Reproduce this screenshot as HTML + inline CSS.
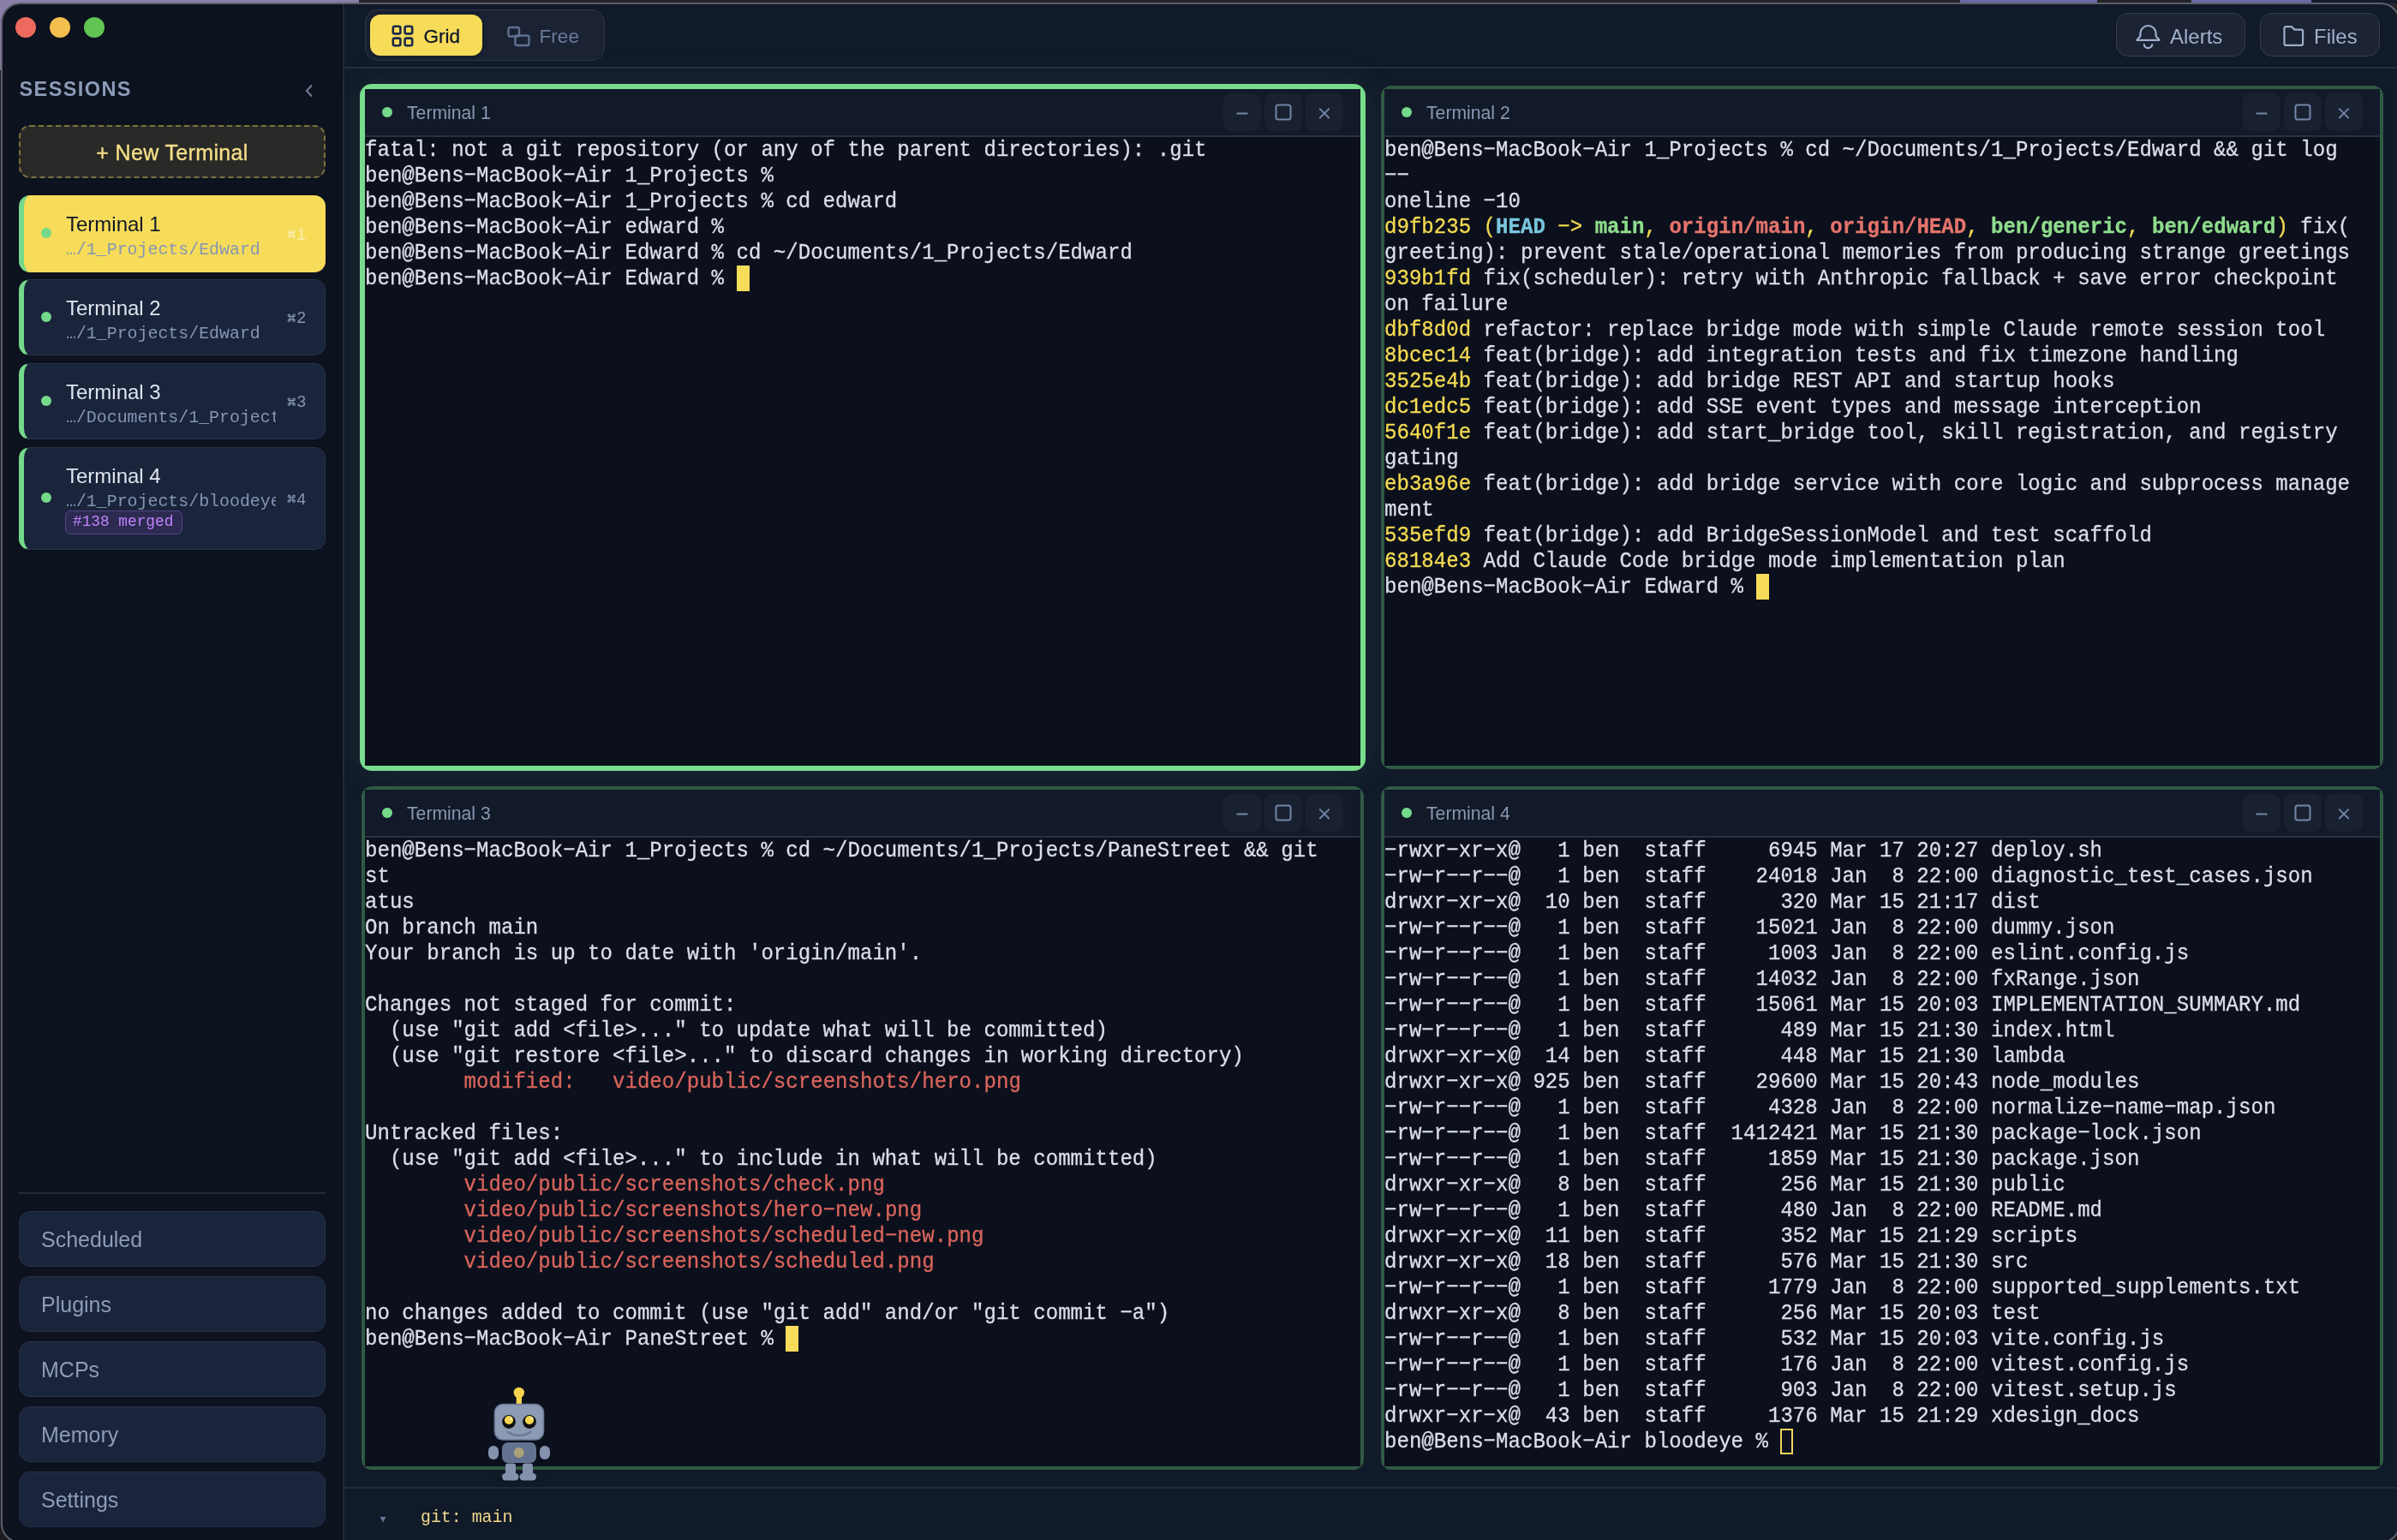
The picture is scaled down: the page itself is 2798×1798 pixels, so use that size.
<!DOCTYPE html>
<html><head><meta charset="utf-8"><title>PaneStreet</title>
<style>
html,body{margin:0;padding:0}
.inner{will-change:transform}
body{width:2798px;height:1798px;overflow:hidden;position:relative;background:#1e1c22;font-family:"Liberation Sans",sans-serif}
.deskL{position:absolute;left:0;top:0;width:419px;height:82px;background:#8a7fa7}
.deskR{position:absolute;left:419px;top:0;width:2379px;height:30px;background:#262427}
.win{position:absolute;left:2px;top:4px;width:2799px;height:1797px;border-radius:22px;overflow:hidden;background:#111a29}
.inner{position:absolute;left:-2px;top:-4px;width:2798px;height:1798px}
.winborder{position:absolute;left:1px;top:3px;width:2801px;height:1799px;border-radius:23px;border:2px solid #5b606b;box-sizing:border-box;pointer-events:none}
.inner>*{position:absolute}
.sidebar{left:0;top:0;width:400px;height:1798px;background:#0c121e;border-right:2px solid #242933}
.tl{top:20px;width:24px;height:24px;border-radius:50%}
.sess{left:22.5px;top:89px;font-size:23.5px;font-weight:bold;color:#8c9bb8;letter-spacing:1.4px;line-height:30px}
.chev{left:354px;top:97px}
.newt{left:22px;top:146px;width:358px;height:62px;box-sizing:border-box;border:2px dashed #7e7040;border-radius:13px;background:#292a27;color:#f6de88;font-size:25px;text-align:center;line-height:60px;-webkit-text-stroke:0.35px #f6de88;letter-spacing:0.35px}
.card{left:22px;width:358px;box-sizing:border-box;border-radius:13px;background:#1a243b;border:1.5px solid #27324a;border-left:6px solid #74d98a}
.card.active{background:#f7dc5a;border-color:#f7dc5a #f7dc5a #f7dc5a #74d98a}
.cdot{position:absolute;left:20px;width:12px;height:12px;border-radius:50%;background:#74d98a;top:50%;margin-top:-7px}
.card .ctitle{position:absolute;left:49px;top:18px;font-size:24px;color:#dfe5ef;line-height:30px;white-space:nowrap}
.card.active .ctitle{color:#101826}
.card .cpath{position:absolute;left:49px;top:50px;width:245px;overflow:hidden;white-space:nowrap;font-family:"Liberation Mono",monospace;font-size:19.9px;color:#8595b3;line-height:26px}
.ckey{position:absolute;left:307px;top:50%;margin-top:-11.5px;font-size:19px;color:#8896b2;line-height:24px;display:flex;align-items:center}
.ckey span{margin-left:1px}
.card.active .ckey{color:#f9eeb0}
.cmd{display:block}
.badge{position:absolute;left:48px;top:73px;height:28px;box-sizing:border-box;padding:0 10px 0 8px;border:1.5px solid #52438a;background:#2d2a52;border-radius:6px;font-family:"Liberation Mono",monospace;font-size:17.8px;color:#c084fc;line-height:25px;white-space:nowrap}
.sdiv{left:22px;top:1392px;width:358px;height:2px;background:#222a37}
.sbtn{left:22px;width:358px;height:65px;box-sizing:border-box;border-radius:13px;background:#1a243b;border:1.5px solid #27324a;color:#8e9cb8;font-size:25px;line-height:65px;padding-left:25px}
.topbar{left:402px;top:0;width:2397px;height:78px;background:#111a29;border-bottom:2px solid #252d3c}
.toggle{left:426px;top:11px;width:280px;height:60px;box-sizing:border-box;border:1.5px solid #2f384a;border-radius:15px;background:#1a2233}
.gridbtn{position:absolute;left:5px;top:5px;width:131px;height:48px;border-radius:12px;background:#f7dc5a;box-shadow:0 0 6px rgba(0,0,0,0.35)}
.gridbtn svg{position:absolute;left:25px;top:12px}
.gridbtn span{position:absolute;left:62.5px;top:10.5px;font-size:22.6px;line-height:30px;color:#0f1828;-webkit-text-stroke:0.3px #0f1828}
.freebtn svg{position:absolute;left:165px;top:18px}
.freebtn span{position:absolute;left:202.5px;top:15.5px;font-size:22.6px;line-height:30px;color:#6b7b9a}
.tbtn{top:15px;height:51px;box-sizing:border-box;border:1.5px solid #333b4c;border-radius:14px;background:#1b2334}
.tbtn svg{position:absolute;left:0;top:0}
.tbtn span{position:absolute;left:62px;top:11.5px;font-size:24px;line-height:30px;color:#a2b0cb}
.pane{position:absolute;width:1170px;height:798px;box-sizing:border-box;border:4px solid #2f5a43;border-radius:12px;background:#0b101c;--cw:14.45px}
.pane.active{width:1174px;height:802px;border:6px solid #78dc8c;border-radius:14px;box-shadow:0 0 40px rgba(120,220,140,0.10)}
.phead{position:absolute;left:0;top:0;right:0;height:54px;background:#121a29;border-bottom:2px solid #283142}
.pdot{position:absolute;left:20px;top:21px;width:12px;height:12px;border-radius:50%;background:#74d98a}
.ptitle{position:absolute;left:49px;top:13px;font-size:21.2px;line-height:30px;color:#8997b1}
.ctrls{position:absolute;right:20px;top:5px;display:flex;gap:4px}
.cb{width:44px;height:44px;border-radius:9px;background:#192131}
.cb svg{display:block}
.term{position:absolute;left:0;top:56px;right:0;bottom:0;background:#0b101c;padding-top:0.7px;font-family:"Liberation Mono",monospace;font-size:24.08px;color:#d9dee8;-webkit-text-stroke:0.3px currentColor}
.row{height:30px;line-height:30px;white-space:pre;transform:scaleY(1.07);transform-origin:0 21.4px}
.y{color:#f4da52}.c{color:#79c6de}.g{color:#8fdc8c}.r{color:#e4736c}.rn{color:#d9645c}.b{font-weight:bold}
.cur{position:absolute;width:15px;height:30px;box-sizing:border-box}
.cur.fill{background:#f7dc5a}
.cur.outline{border:2px solid #f2d35e}
.status{left:402px;top:1736px;width:2397px;height:62px;background:#111a29;border-top:2px solid #232b3a}
.tri{left:443px;top:1770px}
.git{left:491px;top:1757px;font-family:"Liberation Mono",monospace;font-size:19.9px;color:#f0d98a;line-height:30px}
.robot{overflow:visible}

</style></head><body>
<div class="deskL"></div><div class="deskR"></div><div style="position:absolute;left:2288px;top:0;width:160px;height:4px;background:#6b6aa6"></div><div style="position:absolute;left:2558px;top:0;width:140px;height:4px;background:#6b6aa6"></div><div style="position:absolute;left:2698px;top:0;width:100px;height:4px;background:#141a2c"></div>
<div class="win"><div class="inner">
<div class="sidebar"></div>
<div class="tl" style="left:18px;background:#ee6a5e"></div><div class="tl" style="left:58px;background:#f4bf4f"></div><div class="tl" style="left:98px;background:#61c554"></div>
<div class="sess">SESSIONS</div>
<svg class="chev" width="14" height="18" viewBox="0 0 14 18"><path d="M10 2.5L4 9l6 6.5" fill="none" stroke="#6d7a96" stroke-width="2.2"/></svg>
<div class="newt">+ New Terminal</div>
<div class="card active" style="top:228px;height:90px"><div class="cdot"></div><div class="ctitle">Terminal 1</div><div class="cpath">…/1_Projects/Edward</div><div class="ckey"><svg class="cmd" width="10.5" height="10.5" viewBox="0 0 13 13"><path d="M4.5 4.5h4v4h-4z M4.5 4.5V3a1.5 1.5 0 1 0-1.5 1.5h1.5 M8.5 4.5V3a1.5 1.5 0 1 1 1.5 1.5H8.5 M4.5 8.5V10a1.5 1.5 0 1 1-1.5-1.5h1.5 M8.5 8.5V10a1.5 1.5 0 1 0 1.5-1.5H8.5" fill="none" stroke="#f9eeb0" stroke-width="1.5"/></svg><span>1</span></div></div>
<div class="card" style="top:326px;height:89px"><div class="cdot"></div><div class="ctitle">Terminal 2</div><div class="cpath">…/1_Projects/Edward</div><div class="ckey"><svg class="cmd" width="10.5" height="10.5" viewBox="0 0 13 13"><path d="M4.5 4.5h4v4h-4z M4.5 4.5V3a1.5 1.5 0 1 0-1.5 1.5h1.5 M8.5 4.5V3a1.5 1.5 0 1 1 1.5 1.5H8.5 M4.5 8.5V10a1.5 1.5 0 1 1-1.5-1.5h1.5 M8.5 8.5V10a1.5 1.5 0 1 0 1.5-1.5H8.5" fill="none" stroke="#8896b2" stroke-width="1.5"/></svg><span>2</span></div></div>
<div class="card" style="top:424px;height:89px"><div class="cdot"></div><div class="ctitle">Terminal 3</div><div class="cpath">…/Documents/1_Projects/PaneStreet</div><div class="ckey"><svg class="cmd" width="10.5" height="10.5" viewBox="0 0 13 13"><path d="M4.5 4.5h4v4h-4z M4.5 4.5V3a1.5 1.5 0 1 0-1.5 1.5h1.5 M8.5 4.5V3a1.5 1.5 0 1 1 1.5 1.5H8.5 M4.5 8.5V10a1.5 1.5 0 1 1-1.5-1.5h1.5 M8.5 8.5V10a1.5 1.5 0 1 0 1.5-1.5H8.5" fill="none" stroke="#8896b2" stroke-width="1.5"/></svg><span>3</span></div></div>
<div class="card" style="top:522px;height:120px"><div class="cdot"></div><div class="ctitle">Terminal 4</div><div class="cpath">…/1_Projects/bloodeye</div><div class="badge">#138 merged</div><div class="ckey"><svg class="cmd" width="10.5" height="10.5" viewBox="0 0 13 13"><path d="M4.5 4.5h4v4h-4z M4.5 4.5V3a1.5 1.5 0 1 0-1.5 1.5h1.5 M8.5 4.5V3a1.5 1.5 0 1 1 1.5 1.5H8.5 M4.5 8.5V10a1.5 1.5 0 1 1-1.5-1.5h1.5 M8.5 8.5V10a1.5 1.5 0 1 0 1.5-1.5H8.5" fill="none" stroke="#8896b2" stroke-width="1.5"/></svg><span>4</span></div></div>
<div class="sdiv"></div>
<div class="sbtn" style="top:1414px">Scheduled</div>
<div class="sbtn" style="top:1490px">Plugins</div>
<div class="sbtn" style="top:1566px">MCPs</div>
<div class="sbtn" style="top:1642px">Memory</div>
<div class="sbtn" style="top:1718px">Settings</div>
<div class="topbar"></div>
<div class="toggle"><div class="gridbtn"><svg width="26" height="26" viewBox="0 0 26 26"><g fill="none" stroke="#1b2a4a" stroke-width="2.6"><rect x="1.8" y="1.8" width="8.6" height="8.6" rx="2"/><rect x="15.6" y="1.8" width="8.6" height="8.6" rx="2"/><rect x="1.8" y="15.6" width="8.6" height="8.6" rx="2"/><rect x="15.6" y="15.6" width="8.6" height="8.6" rx="2"/></g></svg><span>Grid</span></div>
<div class="freebtn"><svg width="28" height="26" viewBox="0 0 28 26"><g fill="none" stroke="#5f7090" stroke-width="2.4"><rect x="1.5" y="2" width="12.5" height="10.5" rx="1.8"/><rect x="9.5" y="11.5" width="16" height="11.5" rx="1.8"/></g></svg><span>Free</span></div></div>
<div class="tbtn" style="left:2470px;width:151px"><svg width="60" height="51" viewBox="0 0 60 51"><g transform="translate(18.5,8.5)"><path d="M4.9 22.3L8.9 17.6V14.6A9.1 9.1 0 0 1 27.1 14.6V17.6L31.1 22.3Z" fill="none" stroke="#a0aecb" stroke-width="2.2" stroke-linejoin="round"/><path d="M13.2 26.8A4.8 4.8 0 0 0 22.8 26.8" fill="none" stroke="#a0aecb" stroke-width="2.2"/></g></svg><span>Alerts</span></div>
<div class="tbtn" style="left:2638px;width:140px"><svg width="60" height="51" viewBox="0 0 60 51"><g transform="translate(20.5,8)"><path d="M7 9.2Q7 7.2 9 7.2H15.5L19 10.6H26.6Q28.6 10.6 28.6 12.6V26.9Q28.6 28.9 26.6 28.9H9Q7 28.9 7 26.9Z" fill="none" stroke="#a0aecb" stroke-width="2.2" stroke-linejoin="round"/></g></svg><span>Files</span></div>
<div class="pane active" style="left:420px;top:98px">
<div class="phead"><div class="pdot"></div><div class="ptitle">Terminal 1</div><div class="ctrls"><div class="cb"><svg width="44" height="44" viewBox="0 0 44 44"><path d="M15.5 23.5h13" stroke="#7386a6" stroke-width="2"/></svg></div><div class="cb"><svg width="44" height="44" viewBox="0 0 44 44"><rect x="13.5" y="13.5" width="17" height="17" rx="2.5" fill="none" stroke="#7386a6" stroke-width="2"/></svg></div><div class="cb"><svg width="44" height="44" viewBox="0 0 44 44"><path d="M16.3 17.6l11.4 11.4M27.7 17.6l-11.4 11.4" stroke="#7386a6" stroke-width="1.8"/></svg></div></div></div>
<div class="term"><div class="row">fatal: not a git repository (or any of the parent directories): .git</div>
<div class="row">ben@Bens−MacBook−Air 1_Projects %</div>
<div class="row">ben@Bens−MacBook−Air 1_Projects % cd edward</div>
<div class="row">ben@Bens−MacBook−Air edward %</div>
<div class="row">ben@Bens−MacBook−Air Edward % cd ~/Documents/1_Projects/Edward</div>
<div class="row">ben@Bens−MacBook−Air Edward % </div><div class="cur fill" style="top:150px;left:calc(30 * var(--cw))"></div></div>
</div>
<div class="pane " style="left:1612px;top:100px">
<div class="phead"><div class="pdot"></div><div class="ptitle">Terminal 2</div><div class="ctrls"><div class="cb"><svg width="44" height="44" viewBox="0 0 44 44"><path d="M15.5 23.5h13" stroke="#7386a6" stroke-width="2"/></svg></div><div class="cb"><svg width="44" height="44" viewBox="0 0 44 44"><rect x="13.5" y="13.5" width="17" height="17" rx="2.5" fill="none" stroke="#7386a6" stroke-width="2"/></svg></div><div class="cb"><svg width="44" height="44" viewBox="0 0 44 44"><path d="M16.3 17.6l11.4 11.4M27.7 17.6l-11.4 11.4" stroke="#7386a6" stroke-width="1.8"/></svg></div></div></div>
<div class="term"><div class="row">ben@Bens−MacBook−Air 1_Projects % cd ~/Documents/1_Projects/Edward &amp;&amp; git log</div>
<div class="row">−−</div>
<div class="row">oneline −10</div>
<div class="row"><span class="y">d9fb235 (</span><span class="c b">HEAD</span><span class="y"> −&gt; </span><span class="g b">main</span><span class="y">, </span><span class="r b">origin/main</span><span class="y">, </span><span class="r b">origin/HEAD</span><span class="y">, </span><span class="g b">ben/generic</span><span class="y">, </span><span class="g b">ben/edward</span><span class="y">)</span> fix(</div>
<div class="row">greeting): prevent stale/operational memories from producing strange greetings</div>
<div class="row"><span class="y">939b1fd</span> fix(scheduler): retry with Anthropic fallback + save error checkpoint</div>
<div class="row">on failure</div>
<div class="row"><span class="y">dbf8d0d</span> refactor: replace bridge mode with simple Claude remote session tool</div>
<div class="row"><span class="y">8bcec14</span> feat(bridge): add integration tests and fix timezone handling</div>
<div class="row"><span class="y">3525e4b</span> feat(bridge): add bridge REST API and startup hooks</div>
<div class="row"><span class="y">dc1edc5</span> feat(bridge): add SSE event types and message interception</div>
<div class="row"><span class="y">5640f1e</span> feat(bridge): add start_bridge tool, skill registration, and registry</div>
<div class="row">gating</div>
<div class="row"><span class="y">eb3a96e</span> feat(bridge): add bridge service with core logic and subprocess manage</div>
<div class="row">ment</div>
<div class="row"><span class="y">535efd9</span> feat(bridge): add BridgeSessionModel and test scaffold</div>
<div class="row"><span class="y">68184e3</span> Add Claude Code bridge mode implementation plan</div>
<div class="row">ben@Bens−MacBook−Air Edward % </div><div class="cur fill" style="top:510px;left:calc(30 * var(--cw))"></div></div>
</div>
<div class="pane " style="left:422px;top:918px">
<div class="phead"><div class="pdot"></div><div class="ptitle">Terminal 3</div><div class="ctrls"><div class="cb"><svg width="44" height="44" viewBox="0 0 44 44"><path d="M15.5 23.5h13" stroke="#7386a6" stroke-width="2"/></svg></div><div class="cb"><svg width="44" height="44" viewBox="0 0 44 44"><rect x="13.5" y="13.5" width="17" height="17" rx="2.5" fill="none" stroke="#7386a6" stroke-width="2"/></svg></div><div class="cb"><svg width="44" height="44" viewBox="0 0 44 44"><path d="M16.3 17.6l11.4 11.4M27.7 17.6l-11.4 11.4" stroke="#7386a6" stroke-width="1.8"/></svg></div></div></div>
<div class="term"><div class="row">ben@Bens−MacBook−Air 1_Projects % cd ~/Documents/1_Projects/PaneStreet &amp;&amp; git</div>
<div class="row">st</div>
<div class="row">atus</div>
<div class="row">On branch main</div>
<div class="row">Your branch is up to date with &#x27;origin/main&#x27;.</div>
<div class="row"></div>
<div class="row">Changes not staged for commit:</div>
<div class="row">  (use &quot;git add &lt;file&gt;...&quot; to update what will be committed)</div>
<div class="row">  (use &quot;git restore &lt;file&gt;...&quot; to discard changes in working directory)</div>
<div class="row">        <span class="rn">modified:   video/public/screenshots/hero.png</span></div>
<div class="row"></div>
<div class="row">Untracked files:</div>
<div class="row">  (use &quot;git add &lt;file&gt;...&quot; to include in what will be committed)</div>
<div class="row">        <span class="rn">video/public/screenshots/check.png</span></div>
<div class="row">        <span class="rn">video/public/screenshots/hero−new.png</span></div>
<div class="row">        <span class="rn">video/public/screenshots/scheduled−new.png</span></div>
<div class="row">        <span class="rn">video/public/screenshots/scheduled.png</span></div>
<div class="row"></div>
<div class="row">no changes added to commit (use &quot;git add&quot; and/or &quot;git commit −a&quot;)</div>
<div class="row">ben@Bens−MacBook−Air PaneStreet % </div><div class="cur fill" style="top:570px;left:calc(34 * var(--cw))"></div></div>
</div>
<div class="pane " style="left:1612px;top:918px">
<div class="phead"><div class="pdot"></div><div class="ptitle">Terminal 4</div><div class="ctrls"><div class="cb"><svg width="44" height="44" viewBox="0 0 44 44"><path d="M15.5 23.5h13" stroke="#7386a6" stroke-width="2"/></svg></div><div class="cb"><svg width="44" height="44" viewBox="0 0 44 44"><rect x="13.5" y="13.5" width="17" height="17" rx="2.5" fill="none" stroke="#7386a6" stroke-width="2"/></svg></div><div class="cb"><svg width="44" height="44" viewBox="0 0 44 44"><path d="M16.3 17.6l11.4 11.4M27.7 17.6l-11.4 11.4" stroke="#7386a6" stroke-width="1.8"/></svg></div></div></div>
<div class="term"><div class="row">−rwxr−xr−x@   1 ben  staff     6945 Mar 17 20:27 deploy.sh</div>
<div class="row">−rw−r−−r−−@   1 ben  staff    24018 Jan  8 22:00 diagnostic_test_cases.json</div>
<div class="row">drwxr−xr−x@  10 ben  staff      320 Mar 15 21:17 dist</div>
<div class="row">−rw−r−−r−−@   1 ben  staff    15021 Jan  8 22:00 dummy.json</div>
<div class="row">−rw−r−−r−−@   1 ben  staff     1003 Jan  8 22:00 eslint.config.js</div>
<div class="row">−rw−r−−r−−@   1 ben  staff    14032 Jan  8 22:00 fxRange.json</div>
<div class="row">−rw−r−−r−−@   1 ben  staff    15061 Mar 15 20:03 IMPLEMENTATION_SUMMARY.md</div>
<div class="row">−rw−r−−r−−@   1 ben  staff      489 Mar 15 21:30 index.html</div>
<div class="row">drwxr−xr−x@  14 ben  staff      448 Mar 15 21:30 lambda</div>
<div class="row">drwxr−xr−x@ 925 ben  staff    29600 Mar 15 20:43 node_modules</div>
<div class="row">−rw−r−−r−−@   1 ben  staff     4328 Jan  8 22:00 normalize−name−map.json</div>
<div class="row">−rw−r−−r−−@   1 ben  staff  1412421 Mar 15 21:30 package−lock.json</div>
<div class="row">−rw−r−−r−−@   1 ben  staff     1859 Mar 15 21:30 package.json</div>
<div class="row">drwxr−xr−x@   8 ben  staff      256 Mar 15 21:30 public</div>
<div class="row">−rw−r−−r−−@   1 ben  staff      480 Jan  8 22:00 README.md</div>
<div class="row">drwxr−xr−x@  11 ben  staff      352 Mar 15 21:29 scripts</div>
<div class="row">drwxr−xr−x@  18 ben  staff      576 Mar 15 21:30 src</div>
<div class="row">−rw−r−−r−−@   1 ben  staff     1779 Jan  8 22:00 supported_supplements.txt</div>
<div class="row">drwxr−xr−x@   8 ben  staff      256 Mar 15 20:03 test</div>
<div class="row">−rw−r−−r−−@   1 ben  staff      532 Mar 15 20:03 vite.config.js</div>
<div class="row">−rw−r−−r−−@   1 ben  staff      176 Jan  8 22:00 vitest.config.js</div>
<div class="row">−rw−r−−r−−@   1 ben  staff      903 Jan  8 22:00 vitest.setup.js</div>
<div class="row">drwxr−xr−x@  43 ben  staff     1376 Mar 15 21:29 xdesign_docs</div>
<div class="row">ben@Bens−MacBook−Air bloodeye % </div><div class="cur outline" style="top:690px;left:calc(32 * var(--cw))"></div></div>
</div>
<div class="status"></div>
<svg class="tri" width="8" height="8" viewBox="0 0 8 8"><path d="M0.5 1h7L4 7.5z" fill="#64728f"/></svg>
<div class="git">git: main</div>
<svg class="robot" width="90" height="110" viewBox="0 0 90 110" style="left:561px;top:1616px">
<ellipse cx="45" cy="111" rx="30" ry="3.5" fill="#0a0f19" opacity="0.25"/>
<rect x="41.7" y="10" width="6.3" height="14" fill="#f4d44e"/>
<circle cx="44.8" cy="10" r="6.2" fill="#f4d44e"/>
<rect x="16.5" y="23.5" width="57" height="41.5" rx="10" fill="#8d9ab4" stroke="#6d7c9a" stroke-width="1.6"/>
<circle cx="33" cy="44" r="7.9" fill="#111111"/><circle cx="57" cy="44" r="7.9" fill="#111111"/>
<circle cx="33" cy="42" r="5.1" fill="#f4d650"/><circle cx="57" cy="42" r="5.1" fill="#f4d650"/>
<circle cx="35.6" cy="40.2" r="1.6" fill="#fff6c8" opacity="0.85"/><circle cx="59.6" cy="40.2" r="1.6" fill="#fff6c8" opacity="0.85"/>
<path d="M31.8 55.8Q45 64 58.2 55.8" fill="none" stroke="#6a7b9b" stroke-width="2.6" stroke-linecap="round"/>
<rect x="25" y="68" width="40" height="24" rx="7" fill="#627290"/>
<circle cx="44.8" cy="80" r="6" fill="#a9a276"/>
<rect x="9" y="72" width="12" height="16" rx="6" fill="#8592ae"/>
<rect x="69" y="72" width="12" height="16" rx="6" fill="#8592ae"/>
<rect x="29" y="92.5" width="12" height="14" rx="3" fill="#8592ae"/>
<rect x="49" y="92.5" width="12" height="14" rx="3" fill="#8592ae"/>
<rect x="25" y="104" width="19.5" height="8.5" rx="4.2" fill="#8592ae"/>
<rect x="45.5" y="104" width="19.5" height="8.5" rx="4.2" fill="#8592ae"/>
</svg>
</div></div>
<div class="winborder"></div>
</body></html>
